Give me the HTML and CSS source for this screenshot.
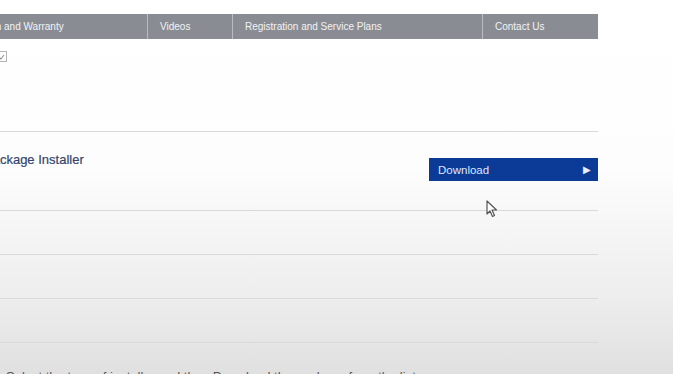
FILE: index.html
```html
<!DOCTYPE html>
<html lang="en">
<head>
    <meta charset="UTF-8">
    <title>Downloads</title>
    <link rel="stylesheet" href="styles.css">
</head>
<body>
    <div class="page">
        <div class="tabs">
            <div class="tab tab-first">Documentation and Warranty</div>
            <div class="tab tab-videos">Videos</div>
            <div class="tab tab-reg">Registration and Service Plans</div>
            <div class="tab tab-contact">Contact Us</div>
        </div>

        <div class="row row-check">
            <span class="checkbox">
                <svg width="7" height="6" viewBox="0 0 7 6"><path d="M1 3.2 L2.8 5 L6 1" fill="none" stroke="#9a9a9a" stroke-width="1.2"/></svg>
            </span>
        </div>

        <div class="row row-item">
            <div class="item-title">Package Installer</div>
            <a class="download">Download <span class="arrow">&#9654;</span></a>
        </div>

        <div class="row row-empty"></div>
        <div class="row row-empty"></div>
        <div class="row row-empty"></div>

        <div class="footer-text">Select the type of installer and then Download the package from the list</div>
    </div>

    <svg class="cursor" width="12" height="18" viewBox="0 0 12 18">
        <path d="M1 1 L1 14 L4 11 L6.5 16.5 L8.5 15.5 L6 10 L10.5 10 Z" fill="#fff" stroke="#555" stroke-width="1.2" stroke-linejoin="round"/>
    </svg>
</body>
</html>
```

FILE: styles.css
```css
* {
    box-sizing: border-box;
}

html, body {
    margin: 0;
    height: 374px;
    overflow: hidden;
}

body {
    font-family: "Liberation Sans", Arial, sans-serif;
    background: linear-gradient(180deg, #ffffff 0%, #fdfdfd 45%, #ededed 80%, #e0e0e0 100%);
    position: relative;
}

.page {
    width: 648px;
    margin-left: -50px;
    padding-top: 14px;
}

.tabs {
    display: flex;
    height: 25px;
    background: #8a8c93;
    color: #f2f3f6;
    font-size: 10px;
    line-height: 25px;
}

.tab {
    padding-left: 12px;
    border-right: 1px solid #babcc2;
    white-space: nowrap;
    overflow: hidden;
}

.tab-first { width: 198px; padding-left: 0; text-indent: -16px; }
.tab-videos { width: 85px; }
.tab-reg { width: 250px; }
.tab-contact { width: 115px; border-right: none; }

.row {
    border-bottom: 1px solid #d9d9d9;
}

.row-check {
    height: 93px;
    padding: 12px 0 0 46px;
}

.checkbox {
    display: flex;
    align-items: center;
    justify-content: center;
    width: 11px;
    height: 11px;
    border: 1px solid #b5b5b5;
    background: #fff;
}

.row-item {
    height: 79px;
    padding-top: 20px;
    display: flex;
    flex-direction: column;
    align-items: flex-end;
}

.item-title {
    align-self: flex-start;
    padding-left: 34px;
    font-size: 13px;
    color: #34456b;
    -webkit-text-stroke: 0.2px #34456b;
}

.download {
    display: flex;
    justify-content: space-between;
    align-items: center;
    width: 169px;
    height: 23px;
    margin-top: -9px;
    padding: 0 7px 0 9px;
    background: #0c3a97;
    color: #dfe8ff;
    font-size: 11.5px;
}

.arrow {
    font-size: 10px;
    color: #e9efff;
}

.row-empty {
    height: 44px;
}

.footer-text {
    margin-top: 26px;
    padding-left: 56px;
    font-size: 13px;
    color: #555;
    white-space: nowrap;
}

.cursor {
    position: absolute;
    left: 486px;
    top: 200px;
}
```
